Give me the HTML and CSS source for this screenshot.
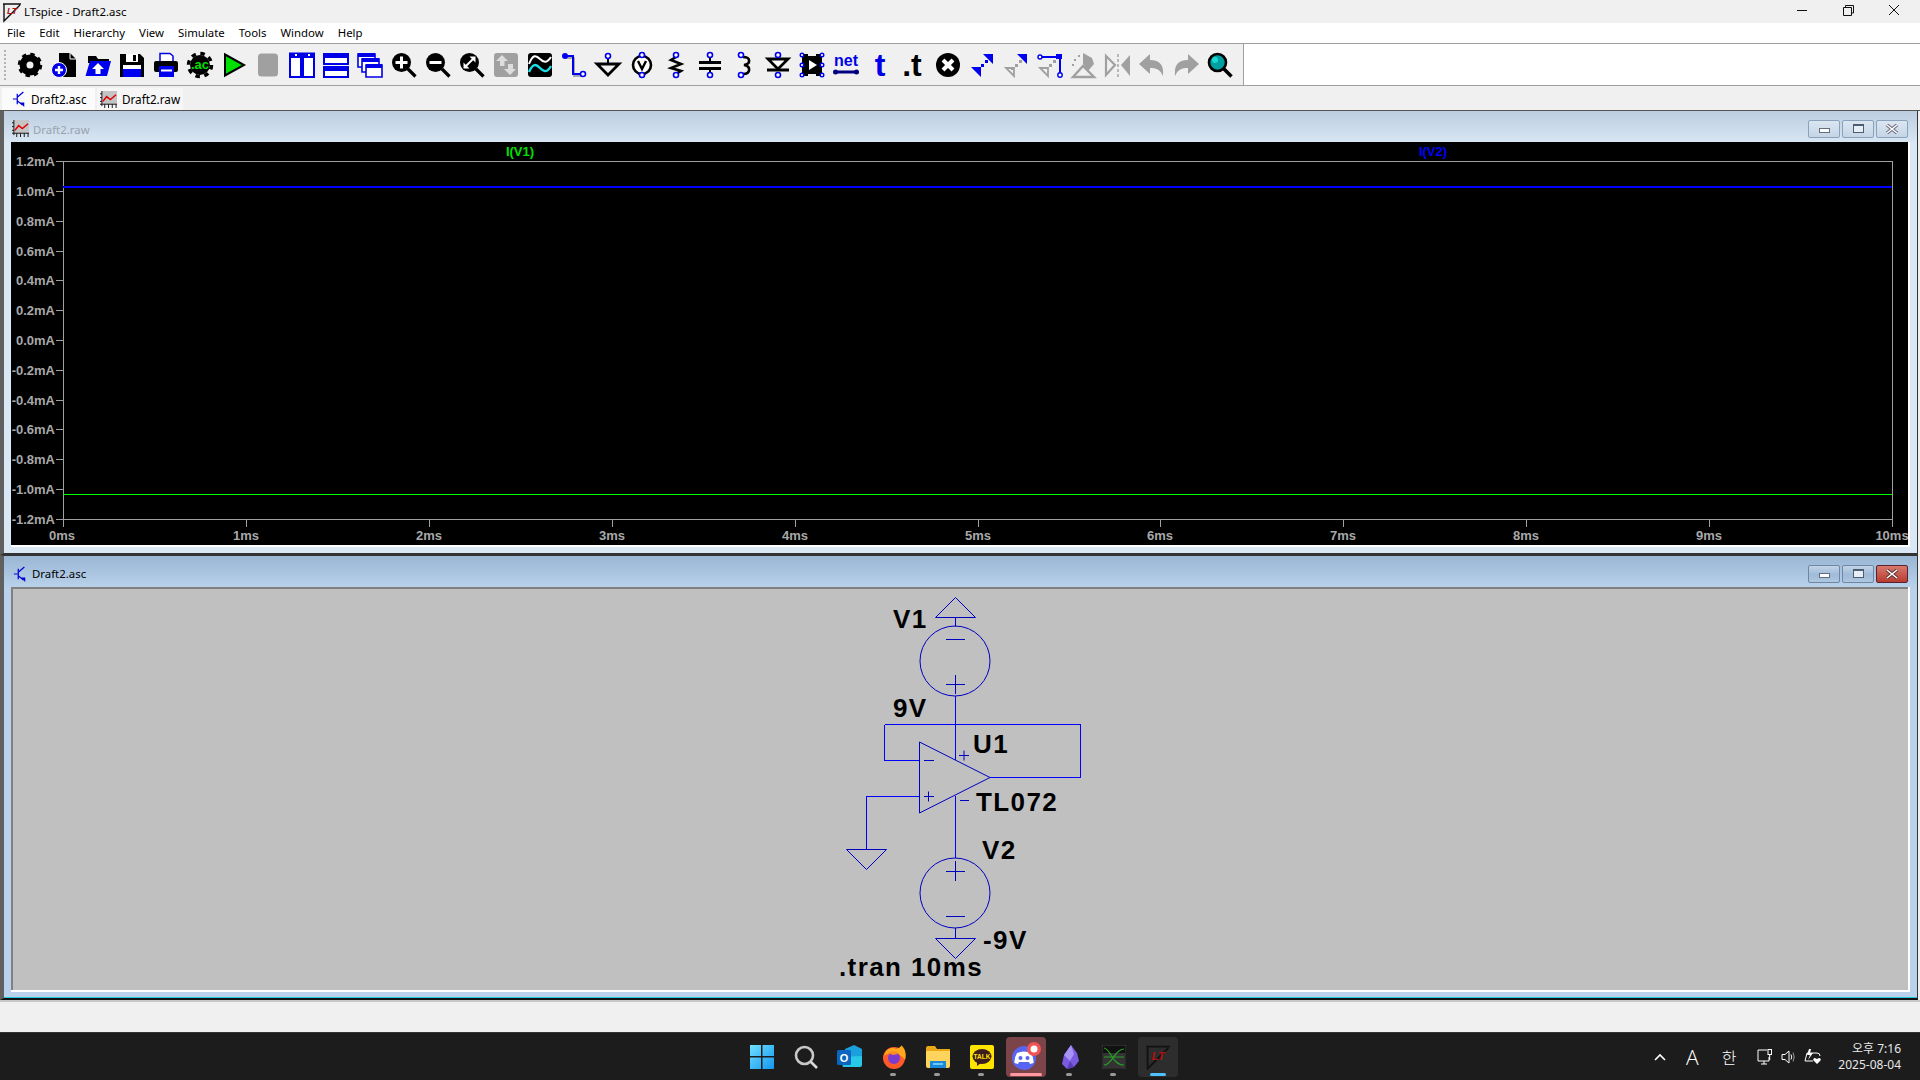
FILE: index.html
```html
<!DOCTYPE html>
<html lang="en">
<head>
    <meta charset="UTF-8">
    <title>LTspice - Draft2.asc</title>
    <link rel="stylesheet" href="styles.css">
</head>
<body>
    <svg class="defs" width="0" height="0">
        <symbol id="logo" viewBox="0 0 20 20" overflow="visible">
            <path d="M1 2L19 2M2 2V19L18 3" fill="none" stroke="#111" stroke-width="1.4"/>
            <text x="5" y="12" class="logo-text">LT</text>
        </symbol>
        <symbol id="transistor" viewBox="0 0 16 18">
            <path d="M1 9H6M6 3V15M6 7L13 1M6 11L12 16" fill="none" stroke="#0000d8" stroke-width="1.4"/>
            <path d="M9 13L14 18L14 13Z" fill="#0000d8"/>
        </symbol>
        <symbol id="waveicon" viewBox="0 0 18 18">
            <rect x="2" y="0" width="16" height="14" fill="#c4c4c4"/>
            <path d="M2 0V16M0 14H18M0 11H2M0 7H2M0 3H2M5 14V18M9 14V18M13 14V18M17 14V18" stroke="#111" fill="none"/>
            <path d="M3 11L7 6L11 9L17 4" stroke="#e00000" stroke-width="1.6" fill="none"/>
        </symbol>
    </svg>

    <header class="titlebar">
        <svg class="app-logo" width="20" height="20"><use href="#logo"/></svg>
        <span class="app-title">LTspice - Draft2.asc</span>
        <div class="caption">
            <svg width="46" height="20" viewBox="0 0 46 20"><path d="M18 10.5H28" stroke="#111"/></svg>
            <svg width="46" height="20" viewBox="0 0 46 20"><path d="M18.5 7.5H26.5V15.5H18.5ZM20.5 7V5.5H28.5V13H27" fill="none" stroke="#111"/></svg>
            <svg width="46" height="20" viewBox="0 0 46 20"><path d="M18 5L28 15M28 5L18 15" stroke="#111"/></svg>
        </div>
    </header>

    <nav class="menubar">
        <span>File</span><span>Edit</span><span>Hierarchy</span><span>View</span><span>Simulate</span><span>Tools</span><span>Window</span><span>Help</span>
    </nav>

    <div class="toolrow">
        <div class="toolbar">
            <!-- control panel -->
            <svg class="ico" viewBox="0 0 28 28"><circle cx="14" cy="14" r="7" fill="none" stroke="#000" stroke-width="7"/><circle cx="14" cy="14" r="10.5" fill="none" stroke="#000" stroke-width="3.5" stroke-dasharray="4.2 4.05"/></svg>
            <!-- new schematic -->
            <svg class="ico" viewBox="0 0 28 28"><path d="M9 2H20L26 8V26H9Z" fill="#000"/><path d="M20 2V8H26" fill="none" stroke="#fff"/><circle cx="9" cy="19" r="7.5" fill="#0000e8" stroke="#fff"/><path d="M5 19H13M9 15V23" stroke="#fff" stroke-width="2.4"/></svg>
            <!-- open -->
            <svg class="ico" viewBox="0 0 28 28"><path d="M4 5H12L14 8H25V12H4Z" fill="#000"/><path d="M6 10H27L23 25H1.500Z" fill="#0000f0"/><path d="M14 12L20 18H16.500V23H11.500V18H8Z" fill="#fff"/></svg>
            <!-- save -->
            <svg class="ico" viewBox="0 0 28 28"><path d="M2 3H22L26 7V26H2Z" fill="#000"/><rect x="8" y="3" width="12" height="8" fill="#fff"/><rect x="15" y="4" width="3" height="6" fill="#000"/><rect x="5" y="14" width="18" height="4" fill="#fff"/><rect x="5" y="18" width="18" height="8" fill="#0000f0"/></svg>
            <!-- print -->
            <svg class="ico" viewBox="0 0 28 28"><path d="M8 2.500H18L21 5V11H8Z" fill="#fff" stroke="#0000e8" stroke-width="1.500"/><rect x="2" y="10" width="24" height="11" rx="2" fill="#000"/><rect x="7" y="15" width="15" height="11" fill="#0000f0"/><rect x="9" y="18.500" width="11" height="2" fill="#fff"/></svg>
            <!-- .ac -->
            <svg class="ico" viewBox="0 0 28 28"><circle cx="14" cy="14" r="10" fill="#000"/><circle cx="14" cy="14" r="11.500" fill="none" stroke="#000" stroke-width="3.500" stroke-dasharray="4.500 4.530"/><text x="14" y="18" class="ac-text">.ac</text></svg>
            <!-- run -->
            <svg class="ico" viewBox="0 0 28 28"><path d="M5 3.500L24 14L5 24.500Z" fill="#00e000" stroke="#000" stroke-width="2"/></svg>
            <!-- halt -->
            <svg class="ico" viewBox="0 0 28 28"><rect x="4" y="2.500" width="20" height="23" rx="3.500" fill="#a0a0a0"/></svg>
            <!-- tile vertical -->
            <svg class="ico" viewBox="0 0 28 28"><path d="M2 2.500H13V26H2ZM15 2.500H26V26H15Z" fill="#fff" stroke="#0000e8" stroke-width="2"/><rect x="2" y="2" width="11" height="5" fill="#0000e8"/><rect x="15" y="2" width="11" height="5" fill="#0000e8"/><rect x="7" y="3" width="2" height="2" fill="#fff"/><rect x="20" y="3" width="2" height="2" fill="#fff"/></svg>
            <!-- tile horizontal -->
            <svg class="ico" viewBox="0 0 28 28"><path d="M2 3H26V13H2ZM2 16H26V26H2Z" fill="#fff" stroke="#0000e8" stroke-width="2"/><rect x="2" y="2" width="24" height="5" fill="#0000e8"/><rect x="2" y="15" width="24" height="5" fill="#0000e8"/></svg>
            <!-- cascade -->
            <svg class="ico" viewBox="0 0 28 28"><path d="M2 3H19V16H2Z" fill="#fff" stroke="#0000e8" stroke-width="1.600"/><rect x="2" y="2" width="17" height="4" fill="#0000e8"/><path d="M6 8H23V21H6Z" fill="#fff" stroke="#0000e8" stroke-width="1.600"/><rect x="6" y="7" width="17" height="4" fill="#0000e8"/><path d="M10 14H26V26H10Z" fill="#fff" stroke="#0000e8" stroke-width="1.600"/><rect x="10" y="13" width="16" height="4" fill="#0000e8"/></svg>
            <!-- zoom in -->
            <svg class="ico" viewBox="0 0 28 28"><path d="M18 18L25.500 25.500" stroke="#000" stroke-width="3.200"/><circle cx="11.500" cy="11.500" r="9.500" fill="#000"/><path d="M5.500 11.500H17.500M11.500 5.500V17.500" stroke="#fff" stroke-width="3"/></svg>
            <!-- zoom out -->
            <svg class="ico" viewBox="0 0 28 28"><path d="M18 18L25.500 25.500" stroke="#000" stroke-width="3.200"/><circle cx="11.500" cy="11.500" r="9.500" fill="#000"/><path d="M5.500 11.500H17.500" stroke="#fff" stroke-width="3"/></svg>
            <!-- zoom fit -->
            <svg class="ico" viewBox="0 0 28 28"><path d="M18 18L25.500 25.500" stroke="#000" stroke-width="3.200"/><circle cx="11.500" cy="11.500" r="9.500" fill="#000"/><path d="M8 15L15 8" stroke="#fff" stroke-width="2"/><path d="M11.500 5.500H17.500V11.500ZM5.500 11.500V17.500H11.500Z" fill="#fff"/></svg>
            <!-- pan, disabled -->
            <svg class="ico" viewBox="0 0 28 28"><rect x="2" y="2" width="24" height="24" rx="3" fill="#a0a0a0"/><path d="M10 4L16 10H12.500V15H8V10H4Z" fill="#ddd"/><path d="M18 24L24 18H21V13H16V18H12Z" fill="#ddd"/></svg>
            <!-- waveform -->
            <svg class="ico" viewBox="0 0 28 28"><rect x="2" y="2" width="24" height="24" rx="3" fill="#000"/><path d="M3 13C7 3 10 4 14 8S21 12 25 6" fill="none" stroke="#fff" stroke-width="2"/><path d="M3 21C7 12 10 13 14 17S21 22 25 15" fill="none" stroke="#19e0e8" stroke-width="2.400"/></svg>
            <!-- wire -->
            <svg class="ico" viewBox="0 0 28 28"><path d="M6 7H14V25H23" fill="none" stroke="#a8a8a8" stroke-width="2"/><path d="M5 5H13V23H23" fill="none" stroke="#0000f0" stroke-width="2"/><circle cx="5" cy="5" r="3" fill="#0000f0"/><circle cx="23" cy="23" r="2.500" fill="#fff" stroke="#0000f0" stroke-width="1.600"/></svg>
            <!-- ground -->
            <svg class="ico" viewBox="0 0 28 28"><path d="M14 6V12" stroke="#000" stroke-width="2"/><path d="M3 13H25L14 24Z" fill="none" stroke="#000" stroke-width="2.800"/><circle cx="14" cy="5" r="2.500" fill="#fff" stroke="#0000f0" stroke-width="1.600"/></svg>
            <!-- label -->
            <svg class="ico" viewBox="0 0 28 28"><circle cx="14" cy="14" r="9" fill="#fff" stroke="#000" stroke-width="2.600"/><path d="M10 10L14 18L18 10" fill="none" stroke="#000" stroke-width="2.400"/><circle cx="14" cy="4" r="2.500" fill="#fff" stroke="#0000f0" stroke-width="1.600"/><circle cx="14" cy="24" r="2.500" fill="#fff" stroke="#0000f0" stroke-width="1.600"/></svg>
            <!-- resistor -->
            <svg class="ico" viewBox="0 0 28 28"><path d="M14 6L9 9L19 13L9 17L19 20L14 23" fill="none" stroke="#000" stroke-width="2.600"/><circle cx="14" cy="4" r="2.500" fill="#fff" stroke="#0000f0" stroke-width="1.600"/><circle cx="14" cy="24" r="2.500" fill="#fff" stroke="#0000f0" stroke-width="1.600"/></svg>
            <!-- capacitor -->
            <svg class="ico" viewBox="0 0 28 28"><path d="M3 11.500H25M3 17.500H25" stroke="#000" stroke-width="3"/><path d="M14 6V11M14 18V22" stroke="#000" stroke-width="2"/><circle cx="14" cy="4" r="2.500" fill="#fff" stroke="#0000f0" stroke-width="1.600"/><circle cx="14" cy="24" r="2.500" fill="#fff" stroke="#0000f0" stroke-width="1.600"/></svg>
            <!-- inductor -->
            <svg class="ico" viewBox="0 0 28 28"><path d="M13 6C21 6 21 13 14 14C21 15 21 23 13 23" fill="none" stroke="#000" stroke-width="2.600"/><circle cx="11" cy="4" r="2.500" fill="#fff" stroke="#0000f0" stroke-width="1.600"/><circle cx="11" cy="24" r="2.500" fill="#fff" stroke="#0000f0" stroke-width="1.600"/></svg>
            <!-- diode -->
            <svg class="ico" viewBox="0 0 28 28"><path d="M4 8H24L14 18Z" fill="#fff" stroke="#000" stroke-width="2.800"/><path d="M3 19H25" stroke="#000" stroke-width="3"/><circle cx="14" cy="4" r="2.500" fill="#fff" stroke="#0000f0" stroke-width="1.600"/><circle cx="14" cy="24" r="2.500" fill="#fff" stroke="#0000f0" stroke-width="1.600"/></svg>
            <!-- component -->
            <svg class="ico" viewBox="0 0 28 28"><path d="M4 3H10V5H18V3H24V25H18V23H10V25H4Z" fill="#000"/><path d="M11 9L19 14L11 19Z" fill="#fff"/><g fill="#fff" stroke="#0000f0" stroke-width="1.400"><circle cx="4" cy="4" r="1.800"/><circle cx="24" cy="4" r="1.800"/><circle cx="4" cy="14" r="1.800"/><circle cx="24" cy="14" r="1.800"/><circle cx="4" cy="24" r="1.800"/><circle cx="24" cy="24" r="1.800"/></g></svg>
            <!-- net name -->
            <svg class="ico" viewBox="0 0 28 28"><text x="14" y="15" class="net-text">net</text><path d="M3 21H25" stroke="#000080" stroke-width="3"/><circle cx="3.500" cy="21" r="2.500" fill="#000080"/><circle cx="24.500" cy="21" r="2.500" fill="#000080"/></svg>
            <!-- text -->
            <svg class="ico" viewBox="0 0 28 28"><text x="14" y="25" class="t-text t-blue">t</text></svg>
            <!-- spice directive -->
            <svg class="ico" viewBox="0 0 28 28"><text x="12" y="25" class="t-text">.t</text></svg>
            <!-- delete -->
            <svg class="ico" viewBox="0 0 28 28"><circle cx="14" cy="14" r="12" fill="#000"/><path d="M9 9L19 19M19 9L9 19" stroke="#fff" stroke-width="4"/></svg>
            <!-- duplicate / move -->
            <svg class="ico" viewBox="0 0 28 28"><path d="M15 3H25V13ZM3 16H13V26Z" fill="#0000f0"/><path d="M13 13H16V16H13ZM9 17H12V20H9ZM17 9H20V12H17Z" fill="#0000f0"/></svg>
            <svg class="ico" viewBox="0 0 28 28"><path d="M15 3H25V13Z" fill="#0000f0"/><path d="M4 17H12L12 25Z" fill="none" stroke="#a0a0a0" stroke-width="1.800"/><path d="M13 13H16V16H13ZM17 9H20V12H17ZM9 16H12V19H9Z" fill="#a0a0a0"/></svg>
            <svg class="ico" viewBox="0 0 28 28"><path d="M3 6H24V24" fill="none" stroke="#0000f0" stroke-width="2"/><circle cx="4" cy="6" r="2" fill="#fff" stroke="#0000f0" stroke-width="1.400"/><circle cx="24" cy="24" r="2.200" fill="#fff" stroke="#0000f0" stroke-width="1.400"/><rect x="20" y="3" width="6" height="5" fill="#0000f0"/><path d="M4 17H12L12 25Z" fill="none" stroke="#a0a0a0" stroke-width="1.800"/><path d="M13 13H16V16H13ZM17 9H20V12H17Z" fill="#a0a0a0"/></svg>
            <!-- rotate, mirror, undo, redo: disabled -->
            <svg class="ico" viewBox="0 0 28 28"><path d="M13 2L22 7L24 13L18 20L13 13Z" fill="#a0a0a0"/><path d="M3 26L13 15L24 26Z" fill="none" stroke="#a0a0a0" stroke-width="2.400"/><path d="M9 4V6M5 8V10M3 13V15" stroke="#a0a0a0" stroke-width="2"/></svg>
            <svg class="ico" viewBox="0 0 28 28"><path d="M2 5L11 14L2 24Z" fill="none" stroke="#a0a0a0" stroke-width="2.200"/><path d="M26 4L17 14L26 25Z" fill="#a0a0a0"/><path d="M14 3V26" stroke="#a0a0a0" stroke-dasharray="3 2" stroke-width="1.400"/></svg>
            <svg class="ico" viewBox="0 0 28 28"><path d="M12 3V9C22 9 26 14 25 25C22 18 18 17 12 17V23L1 13Z" fill="#a0a0a0"/></svg>
            <svg class="ico" viewBox="0 0 28 28"><path d="M16 3V9C6 9 2 14 3 25C6 18 10 17 16 17V23L27 13Z" fill="#a0a0a0"/></svg>
            <!-- find -->
            <svg class="ico" viewBox="0 0 28 28"><path d="M18 18L25.500 25.500" stroke="#000" stroke-width="3.600"/><circle cx="11.500" cy="11.500" r="8.500" fill="#00a0a0" stroke="#000" stroke-width="2.600"/><circle cx="9" cy="9" r="3" fill="#18d8d0"/></svg>
        </div>
    </div>

    <div class="tabs">
        <div class="tab tab-on"><svg width="14" height="16"><use href="#transistor"/></svg><span>Draft2.asc</span></div>
        <div class="tab"><svg width="17" height="17"><use href="#waveicon"/></svg><span>Draft2.raw</span></div>
    </div>

    <main class="mdi">
        <section class="win win-plot">
            <div class="win-title">
                <svg width="17" height="17"><use href="#waveicon"/></svg>
                <span class="win-name">Draft2.raw</span>
                <div class="win-btns">
                    <span class="wbtn"><i class="g-min"></i></span>
                    <span class="wbtn"><i class="g-max"></i></span>
                    <span class="wbtn"><svg width="14" height="10" viewBox="0 0 14 10"><path d="M2 1L12 9M12 1L2 9" stroke="#667" stroke-width="3.400"/><path d="M2 1L12 9M12 1L2 9" stroke="#fff" stroke-width="1.600"/></svg></span>
                </div>
            </div>
            <div class="canvas canvas-plot">
                <svg class="plot" width="1897" height="403" viewBox="11 142 1897 403" shape-rendering="crispEdges">
                    <path class="axis" d="M63.500 161.500H1892.500V519.500H63.500Z"/>
                    <path class="axis" d="M56 161.500H63M56 191.500H63M56 221.500H63M56 251.500H63M56 280.500H63M56 310.500H63M56 340.500H63M56 370.500H63M56 400.500H63M56 429.500H63M56 459.500H63M56 489.500H63M56 519.500H63"/>
                    <path class="axis" d="M63.500 519V527M246.500 519V527M429.500 519V527M612.500 519V527M795.500 519V527M978.500 519V527M1160.500 519V527M1343.500 519V527M1526.500 519V527M1709.500 519V527M1892.500 519V527"/>
                    <path class="trace-v2" d="M63 187H1892"/>
                    <path class="trace-v1" d="M63 494.500H1892"/>
                    <text class="ylab" x="55" y="166">1.2mA</text>
                    <text class="ylab" x="55" y="196">1.0mA</text>
                    <text class="ylab" x="55" y="226">0.8mA</text>
                    <text class="ylab" x="55" y="256">0.6mA</text>
                    <text class="ylab" x="55" y="285">0.4mA</text>
                    <text class="ylab" x="55" y="315">0.2mA</text>
                    <text class="ylab" x="55" y="345">0.0mA</text>
                    <text class="ylab" x="55" y="375">-0.2mA</text>
                    <text class="ylab" x="55" y="405">-0.4mA</text>
                    <text class="ylab" x="55" y="434">-0.6mA</text>
                    <text class="ylab" x="55" y="464">-0.8mA</text>
                    <text class="ylab" x="55" y="494">-1.0mA</text>
                    <text class="ylab" x="55" y="524">-1.2mA</text>
                    <text class="xlab" x="62" y="540">0ms</text>
                    <text class="xlab" x="246" y="540">1ms</text>
                    <text class="xlab" x="429" y="540">2ms</text>
                    <text class="xlab" x="612" y="540">3ms</text>
                    <text class="xlab" x="795" y="540">4ms</text>
                    <text class="xlab" x="978" y="540">5ms</text>
                    <text class="xlab" x="1160" y="540">6ms</text>
                    <text class="xlab" x="1343" y="540">7ms</text>
                    <text class="xlab" x="1526" y="540">8ms</text>
                    <text class="xlab" x="1709" y="540">9ms</text>
                    <text class="xlab" x="1892" y="540">10ms</text>
                    <text class="tlab-v1" x="520" y="156">I(V1)</text>
                    <text class="tlab-v2" x="1433" y="156">I(V2)</text>
                </svg>
            </div>
        </section>

        <section class="win win-sch">
            <div class="win-title">
                <svg width="14" height="16"><use href="#transistor"/></svg>
                <span class="win-name">Draft2.asc</span>
                <div class="win-btns">
                    <span class="wbtn"><i class="g-min"></i></span>
                    <span class="wbtn"><i class="g-max"></i></span>
                    <span class="wbtn wbtn-close"><svg width="14" height="10" viewBox="0 0 14 10"><path d="M2 1L12 9M12 1L2 9" stroke="#533" stroke-width="3.400"/><path d="M2 1L12 9M12 1L2 9" stroke="#fff" stroke-width="1.600"/></svg></span>
                </div>
            </div>
            <div class="canvas canvas-sch">
                <svg class="schematic" width="1897" height="403" viewBox="11 587 1897 403">
                    <!-- wires -->
                    <path class="wire" d="M955.500 696V760M884.500 724.500H1080.500V777.500H990M884.500 724.500V760.500H919.500"/>
                    <path class="wire" d="M955.500 796V858M919.500 796.500H866.500V849"/>
                    <!-- V1 -->
                    <path class="sym" d="M955.500 597.500L975.500 617.500H935.500ZM955.500 617.500V626.500"/>
                    <circle class="sym" cx="955" cy="661" r="35"/>
                    <path class="sym" d="M946 639.500H965M946 684.500H965M955.500 675V694"/>
                    <!-- op amp -->
                    <path class="sym" d="M919.500 742V813L990 777.500Z"/>
                    <path class="sym" d="M924 760.500H934M924 796.500H934M928.500 791.500V801.500M959 755.500H969M964 750.500V760.500M960 800.500H969"/>
                    <!-- ground -->
                    <path class="sym" d="M846.500 849.500H886.500L866.500 869.500Z"/>
                    <!-- V2 -->
                    <circle class="sym" cx="955" cy="893" r="35"/>
                    <path class="sym" d="M946 871.500H965M955.500 861V881M946 916.500H965M955.500 928V938.500"/>
                    <path class="sym" d="M935.500 938.500H975.500L955.500 958.500Z"/>
                    <text class="lbl" x="893" y="628">V1</text>
                    <text class="lbl" x="893" y="717">9V</text>
                    <text class="lbl" x="973" y="753">U1</text>
                    <text class="lbl" x="976" y="811">TL072</text>
                    <text class="lbl" x="982" y="859">V2</text>
                    <text class="lbl" x="983" y="949">-9V</text>
                    <text class="lbl" x="839" y="976">.tran 10ms</text>
                </svg>
            </div>
        </section>
    </main>

    <div class="statusbar"></div>

    <footer class="taskbar">
        <div></div>
        <div class="apps">
            <div class="app">
                <svg width="24" height="24" viewBox="0 0 24 24"><defs><linearGradient id="winblue" x1="0" y1="0" x2="1" y2="1"><stop offset="0" stop-color="#6fe0ff"/><stop offset="1" stop-color="#1296f0"/></linearGradient></defs><path d="M0 0H11V11H0ZM12.500 0H24V11H12.500ZM0 12.500H11V24H0ZM12.500 12.500H24V24H12.500Z" fill="url(#winblue)"/></svg>
            </div>
            <div class="app">
                <svg width="24" height="24" viewBox="0 0 24 24"><circle cx="10.500" cy="10.500" r="8.500" fill="none" stroke="#c8c8c8" stroke-width="2.600"/><path d="M16.500 16.500L23 23" stroke="#d8d8d8" stroke-width="2.600"/></svg>
            </div>
            <div class="app">
                <svg width="26" height="24" viewBox="0 0 26 24"><path d="M8 4L17 0L25 4V19L17 22H8Z" fill="#1aa0dc"/><path d="M3 12L25 11V20Q25 22 23 22H6Z" fill="#28c8e8"/><rect x="0" y="5" width="14" height="15" rx="1.500" fill="#0a64c0"/><text x="7" y="16.500" class="o-text">O</text></svg>
            </div>
            <div class="app app-open">
                <svg width="24" height="24" viewBox="0 0 24 24"><circle cx="12" cy="13" r="11" fill="#ff5a28"/><path d="M2 11C4 3 11 2 14 4C18 3 20 1 19 0C23 3 25 9 23 15C21 12 14 6 8 8C5 9 3 10 2 11Z" fill="#ffa81c"/><circle cx="12" cy="13" r="6" fill="#7a3cd0"/><path d="M6 8C9 5 14 6 16 9L11 10Z" fill="#ff8a20"/></svg>
            </div>
            <div class="app app-open">
                <svg width="24" height="22" viewBox="0 0 24 22"><path d="M0 2Q0 0 2 0H9L11 3H24V7H0Z" fill="#e8a818"/><path d="M0 5H24V20Q24 22 22 22H2Q0 22 0 20Z" fill="#ffd45c"/><rect x="4" y="15" width="16" height="7" fill="#1a8ad8"/><rect x="7" y="17" width="10" height="2" fill="#6cc8f8"/></svg>
            </div>
            <div class="app app-open">
                <svg width="24" height="24" viewBox="0 0 24 24"><rect width="24" height="24" rx="2" fill="#fee500"/><ellipse cx="12" cy="11.500" rx="9.500" ry="7.500" fill="#3c1e1e"/><path d="M7 17L7 21L11 18Z" fill="#3c1e1e"/><text x="12" y="14" class="talk-text">TALK</text></svg>
            </div>
            <div class="app app-alert">
                <svg width="32" height="32" viewBox="0 0 32 32" class="discord"><circle cx="14" cy="17" r="12" fill="#5865f2"/><path d="M7 12Q14 9 21 12Q24 17 23.500 22L20 23L19 21H9L8 23L4.500 22Q4 17 7 12Z" fill="#fff"/><circle cx="10.500" cy="17" r="2" fill="#5865f2"/><circle cx="17.500" cy="17" r="2" fill="#5865f2"/><circle cx="24" cy="8" r="7" fill="#f05454"/><circle cx="24" cy="8" r="3.500" fill="#fff"/></svg>
            </div>
            <div class="app app-open">
                <svg width="18" height="24" viewBox="0 0 18 24"><path d="M10 0L16 8L18 16L13 22L6 24L1 19L3 10Z" fill="#7a5ae0"/><path d="M10 0L13 9L9 16L3 10Z" fill="#a892f4"/><path d="M9 16L13 22L6 24Z" fill="#5a3cb8"/></svg>
            </div>
            <div class="app app-open">
                <svg width="24" height="24" viewBox="0 0 24 24"><rect width="24" height="24" fill="#111" stroke="#444"/><rect x="1" y="8" width="22" height="15" fill="#333"/><path d="M2 3C9 4 10 20 22 20M2 20C10 20 13 4 22 4M2 12H22" fill="none" stroke="#28a028" stroke-width="1.200"/></svg>
            </div>
            <div class="app app-active">
                <svg width="26" height="26"><use href="#logo"/></svg>
            </div>
        </div>
        <div class="tray">
            <svg class="tray-chev" width="12" height="8" viewBox="0 0 12 8"><path d="M1 7L6 2L11 7" fill="none" stroke="#fff" stroke-width="1.600"/></svg>
            <span class="tray-a">A</span>
            <span class="tray-han">한</span>
            <svg class="tray-net" width="16" height="16" viewBox="0 0 16 16"><path d="M10 1H1V12H12V8M4 15H10M7 12V15" fill="none" stroke="#fff"/><rect x="11" y="0.500" width="3.500" height="5" fill="none" stroke="#fff"/><path d="M12.700 6V11" stroke="#fff"/></svg>
            <svg class="tray-vol" width="16" height="16" viewBox="0 0 16 16"><path d="M1 5.500H4L8 2V14L4 10.500H1Z" fill="none" stroke="#fff"/><path d="M10 5.500Q11.500 8 10 10.500" fill="none" stroke="#fff"/><path d="M12 3.500Q14.500 8 12 12.500" fill="none" stroke="#999"/></svg>
            <svg class="tray-pow" width="18" height="16" viewBox="0 0 18 16"><path d="M3 4H13Q16 4 16 7" fill="none" stroke="#fff"/><path d="M3 4L1 12H9" fill="none" stroke="#fff"/><path d="M5 0L3 6H6L4 11L9 4H6L7 0Z" fill="#fff"/><path d="M13 15L9.500 11.500Q8.500 9.500 11 9L13 10L15 9Q17.500 9.500 16.500 11.500Z" fill="#fff"/></svg>
            <div class="clock"><span>오후 7:16</span><span>2025-08-04</span></div>
        </div>
    </footer>
</body>
</html>
```

FILE: styles.css
```css
* { box-sizing: border-box; }
html, body { margin: 0; height: 100%; }
body { width: 1920px; height: 1080px; overflow: hidden; display: flex; flex-direction: column; background: #f0f0f0; font-family: "Noto Sans", "Noto Sans CJK KR", sans-serif; font-size: 11.4px; color: #000; }
.defs { position: absolute; }
.logo-text { font: italic bold 9px "Liberation Sans", sans-serif; fill: #b01010; }

/* main window frame */
.titlebar { height: 23px; flex: none; display: flex; align-items: center; background: #f0f0f0; padding-left: 2px; }
.app-logo { margin-right: 2px; overflow: visible; }
.app-title { line-height: 20px; }
.caption { margin-left: auto; margin-bottom: 3px; display: flex; margin-right: 3px; }
.menubar { height: 20px; flex: none; display: flex; gap: 14px; padding: 0 0 2px 7px; align-items: center; background: #fff; }

.toolrow { height: 43px; flex: none; background: #fff; border-top: 1px solid #a0a0a0; border-bottom: 1px solid #a0a0a0; }
.toolbar { width: 1244px; height: 41px; display: flex; align-items: center; gap: 6px; padding-left: 16px; background: #f0f0f0; border-right: 1px solid #a0a0a0; position: relative; }
.toolbar::before { content: ""; position: absolute; left: 4px; top: 6px; bottom: 5px; width: 2px; background: repeating-linear-gradient(#b4b4b4 0 2px, transparent 2px 4px); }
.ico { width: 28px; height: 28px; flex: none; overflow: visible; }
.ac-text { font: bold 13px "Liberation Sans", sans-serif; fill: #00e000; text-anchor: middle; }
.net-text { font: bold 16px "Liberation Sans", sans-serif; fill: #0000e8; text-anchor: middle; }
.t-text { font: bold 32px "Liberation Sans", sans-serif; fill: #000; text-anchor: middle; }
.t-blue { fill: #0000e8; }

.tabs { height: 25px; flex: none; display: flex; gap: 2px; padding: 2px 0 0 2px; background: #f0f0f0; border-bottom: 1px solid #555; font-size: 11.7px; }
.tab { height: 22px; display: flex; align-items: center; padding: 0 3px; gap: 5px; background: #f6f6f6; }
.tab-on { width: 93px; padding-left: 10px; background: #fbfbfb; gap: 5px; }

/* MDI area */
.mdi { height: 891px; flex: none; padding: 0 2px 2px 0; background: #f0f0f0; border-bottom: 2px solid #c8c8c8; }
.win { height: 444px; border-left: 4px solid #606060; border-right: 1px solid #333; padding: 0 7px 0 7px; }
.win-plot { height: 444px; background: #dae7f4; border-bottom: 2px solid #333; }
.win-sch { height: 445px; background: #b9d1ea; border-top: 1px solid #333; border-bottom: 2px solid #111; box-shadow: inset 0 -1px 0 #20c8e0; }
.win-title { height: 31px; display: flex; align-items: center; gap: 2px; margin: 0 -7px; padding: 4px 7px 0 10px; }
.win-plot .win-title { background: linear-gradient(#bccde0, #d8e6f3); padding-left: 8px; }
.win-sch .win-title { background: linear-gradient(#99b6d4, #b9d1ea); padding-left: 9px; }
.win-name { margin-left: 2px; }
.win-sch .win-name { margin-left: 3px; }
.win-plot .win-name { color: #9aa3ad; margin-top: 2px; }
.win-btns { margin-left: auto; display: flex; gap: 2px; margin-right: 2px; }
.wbtn { width: 32px; height: 18px; display: flex; align-items: center; justify-content: center; border: 1px solid #8aa2bc; border-radius: 2px; background: linear-gradient(#dbe6f1, #c5d5e6); }
.win-sch .wbtn { background: linear-gradient(#c2d4e7, #9fbad8 55%, #b0c8e0); border-color: #6f87a4; }
.win-sch .wbtn-close { background: linear-gradient(#d8786c, #b83c30); border-color: #5a2230; }
.g-min { width: 11px; height: 5px; margin-top: 4px; background: #fff; border: 1px solid #5f6f82; }
.g-max { width: 11px; height: 9px; background: #e8eef5; border: 1px solid #4d5c70; border-top-width: 2px; }

.canvas { width: 1899px; height: 405px; border-right: 2px solid #fff; border-bottom: 2px solid #fff; }
.canvas svg { display: block; }
.canvas-plot { background: #000; }
.canvas-sch { background: #c0c0c0; box-shadow: inset 2px 2px 0 #808080; }

/* plot */
.axis { fill: none; stroke: #a0a0a0; }
.trace-v1 { stroke: #00ff00; }
.trace-v2 { stroke: #0000ff; stroke-width: 2; }
.ylab, .xlab, .tlab-v1, .tlab-v2 { font: bold 13px "Liberation Sans", sans-serif; }
.ylab { fill: #a8a8a8; text-anchor: end; }
.xlab { fill: #a8a8a8; text-anchor: middle; }
.tlab-v1 { fill: #00e000; text-anchor: middle; }
.tlab-v2 { fill: #0000ff; text-anchor: middle; }

/* schematic */
.wire { fill: none; stroke: #0000ff; stroke-width: 1.2; shape-rendering: crispEdges; }
.sym { fill: none; stroke: #0000c0; stroke-width: 1; }
.lbl { font: bold 26px "Liberation Sans", sans-serif; letter-spacing: 1.4px; fill: #000; }

.statusbar { height: 30px; flex: none; background: #f0f0f0; }

/* taskbar */
.taskbar { height: 48px; flex: none; display: grid; grid-template-columns: 1fr auto 1fr; background: #1c1c1c; border-top: 1px solid #333; color: #fff; }
.apps { display: flex; gap: 4px; align-items: center; }
.app { width: 40px; height: 40px; display: flex; align-items: center; justify-content: center; border-radius: 4px; position: relative; }
.app-open::after, .app-alert::after, .app-active::after { content: ""; position: absolute; left: 16px; bottom: 1px; width: 6px; height: 3px; border-radius: 2px; background: #9a9a9a; }
.app-alert { background: #7a4448; }
.app-alert::after { left: 4px; width: 32px; background: #ff98a0; }
.app-active { background: #2d2d2d; }
.app-active::after { left: 12px; width: 16px; background: #4cc2ff; }
.o-text { font: bold 11px "Liberation Sans", sans-serif; fill: #fff; text-anchor: middle; }
.talk-text { font: bold 6.500px "Liberation Sans", sans-serif; fill: #fee500; text-anchor: middle; }
.tray { display: flex; align-items: center; justify-content: flex-end; padding-right: 19px; }
.tray-chev { margin-right: 20px; }
.tray-a { font-family: "Open Sans", sans-serif; font-weight: 300; font-size: 21px; margin-right: 23px; }
.tray-han { font-family: "Noto Sans CJK KR", sans-serif; font-weight: 300; font-size: 16px; margin-right: 21px; }
.tray-net { margin-right: 8px; }
.tray-vol { margin-right: 7px; }
.tray-pow { margin-right: 16px; }
.clock { display: flex; flex-direction: column; align-items: flex-end; line-height: 16px; font-size: 12px; color: #e8e8e8; }
```
